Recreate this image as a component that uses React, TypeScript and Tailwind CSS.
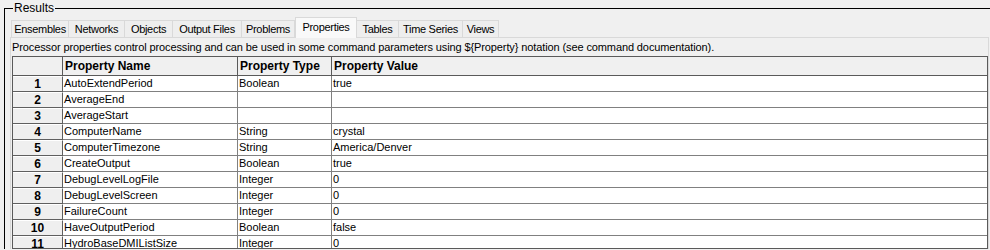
import React from "react";

const tabs = [
  { label: "Ensembles", w: "w-[58px]" },
  { label: "Networks", w: "w-[56px]" },
  { label: "Objects", w: "w-[48px]" },
  { label: "Output Files", w: "w-[69px]" },
  { label: "Problems", w: "w-[53px]" },
  { label: "Properties", w: "w-[62px]", active: true },
  { label: "Tables", w: "w-[42px]" },
  { label: "Time Series", w: "w-[64px]" },
  { label: "Views", w: "w-[36px]" },
];

const rows: [string, string, string][] = [
  ["AutoExtendPeriod", "Boolean", "true"],
  ["AverageEnd", "", ""],
  ["AverageStart", "", ""],
  ["ComputerName", "String", "crystal"],
  ["ComputerTimezone", "String", "America/Denver"],
  ["CreateOutput", "Boolean", "true"],
  ["DebugLevelLogFile", "Integer", "0"],
  ["DebugLevelScreen", "Integer", "0"],
  ["FailureCount", "Integer", "0"],
  ["HaveOutputPeriod", "Boolean", "false"],
  ["HydroBaseDMIListSize", "Integer", "0"],
];

export default function App() {
  return (
    <div className="w-[990px] h-[250px] overflow-hidden bg-[#f0f0f0] text-black font-['Liberation_Sans',Arial,sans-serif]">
      <fieldset className="ml-[4px] border-0 border-l border-t border-black pl-[5px] min-w-0">
        <legend className="ml-[3px] px-[1px] text-[12px] leading-[16px]">Results</legend>

        {/* tab strip */}
        <div className="flex items-end h-[21px] pl-[1px]">
          {tabs.map((t) => (
            <div
              key={t.label}
              className={
                t.active
                  ? `${t.w} h-[21px] -mb-px relative z-10 flex items-center justify-center border border-b-0 border-[#d9d9d9] bg-[#f9f9f9] text-[11px] tracking-[-0.3px] pb-[2px]`
                  : `${t.w} h-[17px] flex items-center justify-center border border-b-0 border-l-0 first:border-l border-[#d9d9d9] bg-[#eeeeee] text-[11px] tracking-[-0.3px]`
              }
            >
              {t.label}
            </div>
          ))}
        </div>

        {/* tab content */}
        <div className="w-[979px] border-l border-t border-r border-[#d9d9d9] pl-[1px]">
          <div className="h-[18px] leading-[18px] text-[11px] tracking-[-0.11px] whitespace-nowrap bg-[#f0f0f0]">
            Processor properties control processing and can be used in some command parameters using ${"{"}Property{"}"} notation (see command documentation).
          </div>

          <div className="w-[976px] h-[193px] overflow-hidden border border-[#5a5a5a] bg-white">
            <div className="grid grid-cols-[50px_175px_94px_1fr] h-[19px] bg-[#f0f0f0] border-b border-[#5a5a5a] text-[12px] font-bold leading-[18px]">
              <div className="border-r border-[#5a5a5a]" />
              <div className="border-r border-[#5a5a5a] pl-[2px]">Property Name</div>
              <div className="border-r border-[#5a5a5a] pl-[2px]">Property Type</div>
              <div className="pl-[2px]">Property Value</div>
            </div>
            {rows.map(([name, type, value], i) => (
              <div key={name} className="grid grid-cols-[50px_175px_94px_1fr] h-[16px] leading-[15px]">
                <div className="bg-[#efefef] border-r border-b border-[#5f5f5f] border-t border-t-white text-center text-[12px] font-bold leading-[14px]">
                  {i + 1}
                </div>
                <div className="border-r border-b border-[#808080] pl-[1px] text-[11px]">{name}</div>
                <div className="border-r border-b border-[#808080] pl-[1px] text-[11px]">{type}</div>
                <div className="border-b border-[#808080] pl-[1px] text-[11px]">{value}</div>
              </div>
            ))}
          </div>
        </div>
      </fieldset>
    </div>
  );
}
